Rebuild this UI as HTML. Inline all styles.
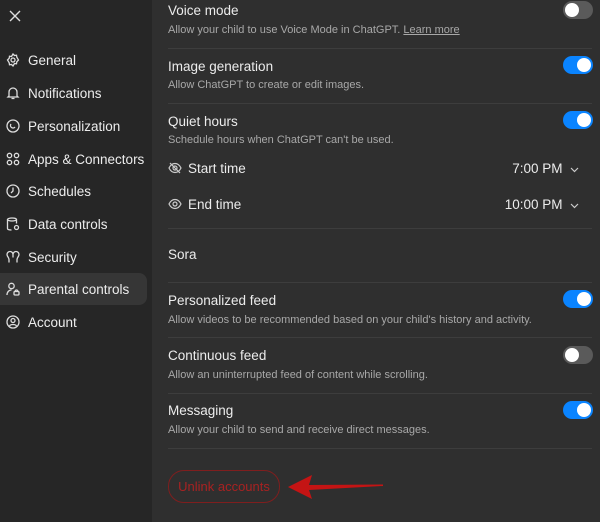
<!DOCTYPE html>
<html><head><style>
body{margin:0;width:600px;height:522px;background:#2f2f2f;font-family:"Liberation Sans",sans-serif;color:#ececec;position:relative;overflow:hidden}
.side{position:absolute;left:0;top:0;width:152px;height:522px;background:#262626}
.it{position:absolute;left:0;height:32px;width:147px;font-size:13.5px;line-height:32px}
.it svg{position:absolute;left:6px;top:9px}
.it span{position:absolute;left:28px;top:1px}
.sel{background:#363636;border-radius:0 8px 8px 0}
.t{position:absolute;left:168px;font-size:13.5px;color:#ececec}
.s{position:absolute;left:168px;font-size:11px;color:#a8a8a8}
.hr{position:absolute;left:168px;width:424px;height:1px;background:#3d3d3d}
.tg{position:absolute;left:563px;width:30px;height:18px;border-radius:9px;background:#0a84ff}
.tg::after{content:"";position:absolute;top:2px;right:2px;width:14px;height:14px;border-radius:50%;background:#fff}
.off{background:#5a5a5a}.off::after{right:auto;left:2px}
.r{position:absolute;font-size:13.5px;right:20px}
</style></head><body>
<div class="side">
<svg style="position:absolute;left:9px;top:10px" width="12" height="12" viewBox="0 0 12 12" stroke="#ddd" stroke-width="1.4"><path d="M1 1L11 11M11 1L1 11"/></svg>
<div class="it" style="top:44px"><svg width="14" height="14" viewBox="0 0 14 14" fill="none" stroke="#ddd" stroke-width="1.3"><circle cx="7" cy="7" r="2"/><path d="M7 1l1.5 1.5 2-.3.3 2L12.5 7l-1.7 1.8-.3 2-2 -.3L7 13l-1.5-1.5-2 .3-.3-2L1.5 7l1.7-1.8.3-2 2 .3z"/></svg><span>General</span></div>
<div class="it" style="top:77px"><svg width="14" height="14" viewBox="0 0 14 14" fill="none" stroke="#ddd" stroke-width="1.3"><path d="M3 10V6a4 4 0 018 0v4l1 1H2zM5.5 12.5h3"/></svg><span>Notifications</span></div>
<div class="it" style="top:110px"><svg width="14" height="14" viewBox="0 0 14 14" fill="none" stroke="#ddd" stroke-width="1.3"><circle cx="7" cy="7" r="6"/><path d="M5 5a2.5 2.5 0 104 3"/></svg><span>Personalization</span></div>
<div class="it" style="top:143px"><svg width="14" height="14" viewBox="0 0 14 14" fill="none" stroke="#ddd" stroke-width="1.3"><circle cx="3.5" cy="3.5" r="2.2"/><circle cx="10.5" cy="3.5" r="2.2"/><circle cx="3.5" cy="10.5" r="2.2"/><circle cx="10.5" cy="10.5" r="2.2"/></svg><span>Apps &amp; Connectors</span></div>
<div class="it" style="top:175px"><svg width="14" height="14" viewBox="0 0 14 14" fill="none" stroke="#ddd" stroke-width="1.3"><circle cx="7" cy="7" r="6"/><path d="M7 3.5V7L5 9"/></svg><span>Schedules</span></div>
<div class="it" style="top:208px"><svg width="14" height="14" viewBox="0 0 14 14" fill="none" stroke="#ddd" stroke-width="1.3"><ellipse cx="6" cy="2.5" rx="4.5" ry="1.5"/><path d="M1.5 2.5v9c0 1 2 1.5 4 1.5M10.5 2.5v4"/><circle cx="10.5" cy="10.5" r="2"/></svg><span>Data controls</span></div>
<div class="it" style="top:241px"><svg width="14" height="14" viewBox="0 0 14 14" fill="none" stroke="#ddd" stroke-width="1.3"><path d="M4 1.5a3 3 0 013 3 3 3 0 013-3 3 3 0 013 3c0 2-2 3-2 5v3M1 4.5a3 3 0 013-3M1 4.5c0 2 2 3 2 5v3M7 4.5v3"/></svg><span>Security</span></div>
<div class="it sel" style="top:273px"><svg width="14" height="14" viewBox="0 0 14 14" fill="none" stroke="#ddd" stroke-width="1.3"><circle cx="5.5" cy="4" r="2.7"/><path d="M1 13c0-3 2-5 4.5-5"/><rect x="8" y="9.5" width="5" height="3.5" rx="1"/><path d="M9 9.5a1.5 1.5 0 013 0"/></svg><span>Parental controls</span></div>
<div class="it" style="top:306px"><svg width="14" height="14" viewBox="0 0 14 14" fill="none" stroke="#ddd" stroke-width="1.3"><circle cx="7" cy="7" r="6"/><circle cx="7" cy="5.5" r="2"/><path d="M3.5 11c1-2 6-2 7 0"/></svg><span>Account</span></div>
</div>

<div class="t" style="top:3px">Voice mode</div>
<div class="s" style="top:24px">Allow your child to use Voice Mode in ChatGPT. <u>Learn more</u></div>
<div class="tg off" style="top:1px"></div>
<div class="hr" style="top:48px"></div>
<div class="t" style="top:59px">Image generation</div>
<div class="s" style="top:79px">Allow ChatGPT to create or edit images.</div>
<div class="tg" style="top:56px"></div>
<div class="hr" style="top:103px"></div>
<div class="t" style="top:114px">Quiet hours</div>
<div class="s" style="top:134px">Schedule hours when ChatGPT can't be used.</div>
<div class="tg" style="top:111px"></div>
<svg style="position:absolute;left:168px;top:161px" width="14" height="14" viewBox="0 0 14 14" fill="none" stroke="#ccc" stroke-width="1.2"><path d="M1 7c1.5-3 3.5-4.5 6-4.5S11.5 4 13 7c-1.5 3-3.5 4.5-6 4.5S2.5 10 1 7z"/><circle cx="7" cy="7" r="2"/><path d="M2 2l10 10"/></svg>
<div class="t" style="left:188px;top:161px">Start time</div>
<div class="r" style="top:161px;right:21px">7:00 PM &nbsp;<svg width="9" height="6" viewBox="0 0 9 6" fill="none" stroke="#ccc" stroke-width="1.2"><path d="M1 1l3.5 3.5L8 1"/></svg></div>
<svg style="position:absolute;left:168px;top:197px" width="14" height="14" viewBox="0 0 14 14" fill="none" stroke="#ccc" stroke-width="1.2"><path d="M1 7c1.5-3 3.5-4.5 6-4.5S11.5 4 13 7c-1.5 3-3.5 4.5-6 4.5S2.5 10 1 7z"/><circle cx="7" cy="7" r="2"/></svg>
<div class="t" style="left:188px;top:197px">End time</div>
<div class="r" style="top:197px;right:21px">10:00 PM &nbsp;<svg width="9" height="6" viewBox="0 0 9 6" fill="none" stroke="#ccc" stroke-width="1.2"><path d="M1 1l3.5 3.5L8 1"/></svg></div>
<div class="hr" style="top:228px"></div>
<div class="t" style="top:247px">Sora</div>
<div class="hr" style="top:282px"></div>
<div class="t" style="top:293px">Personalized feed</div>
<div class="s" style="top:314px">Allow videos to be recommended based on your child's history and activity.</div>
<div class="tg" style="top:290px"></div>
<div class="hr" style="top:337px"></div>
<div class="t" style="top:348px">Continuous feed</div>
<div class="s" style="top:369px">Allow an uninterrupted feed of content while scrolling.</div>
<div class="tg off" style="top:346px"></div>
<div class="hr" style="top:393px"></div>
<div class="t" style="top:403px">Messaging</div>
<div class="s" style="top:424px">Allow your child to send and receive direct messages.</div>
<div class="tg" style="top:401px"></div>
<div class="hr" style="top:448px"></div>
<div style="position:absolute;left:168px;top:470px;width:110px;height:31px;border:1px solid #7f1e1e;border-radius:16px;color:#a82222;font-size:13px;line-height:31px;text-align:center">Unlink accounts</div>
<svg style="position:absolute;left:285px;top:470px" width="100" height="34" viewBox="0 0 100 34"><path d="M3 17L27 5L24 15L98 14.5V16L24 20L27 29Z" fill="#c41414"/></svg>
</body></html>
